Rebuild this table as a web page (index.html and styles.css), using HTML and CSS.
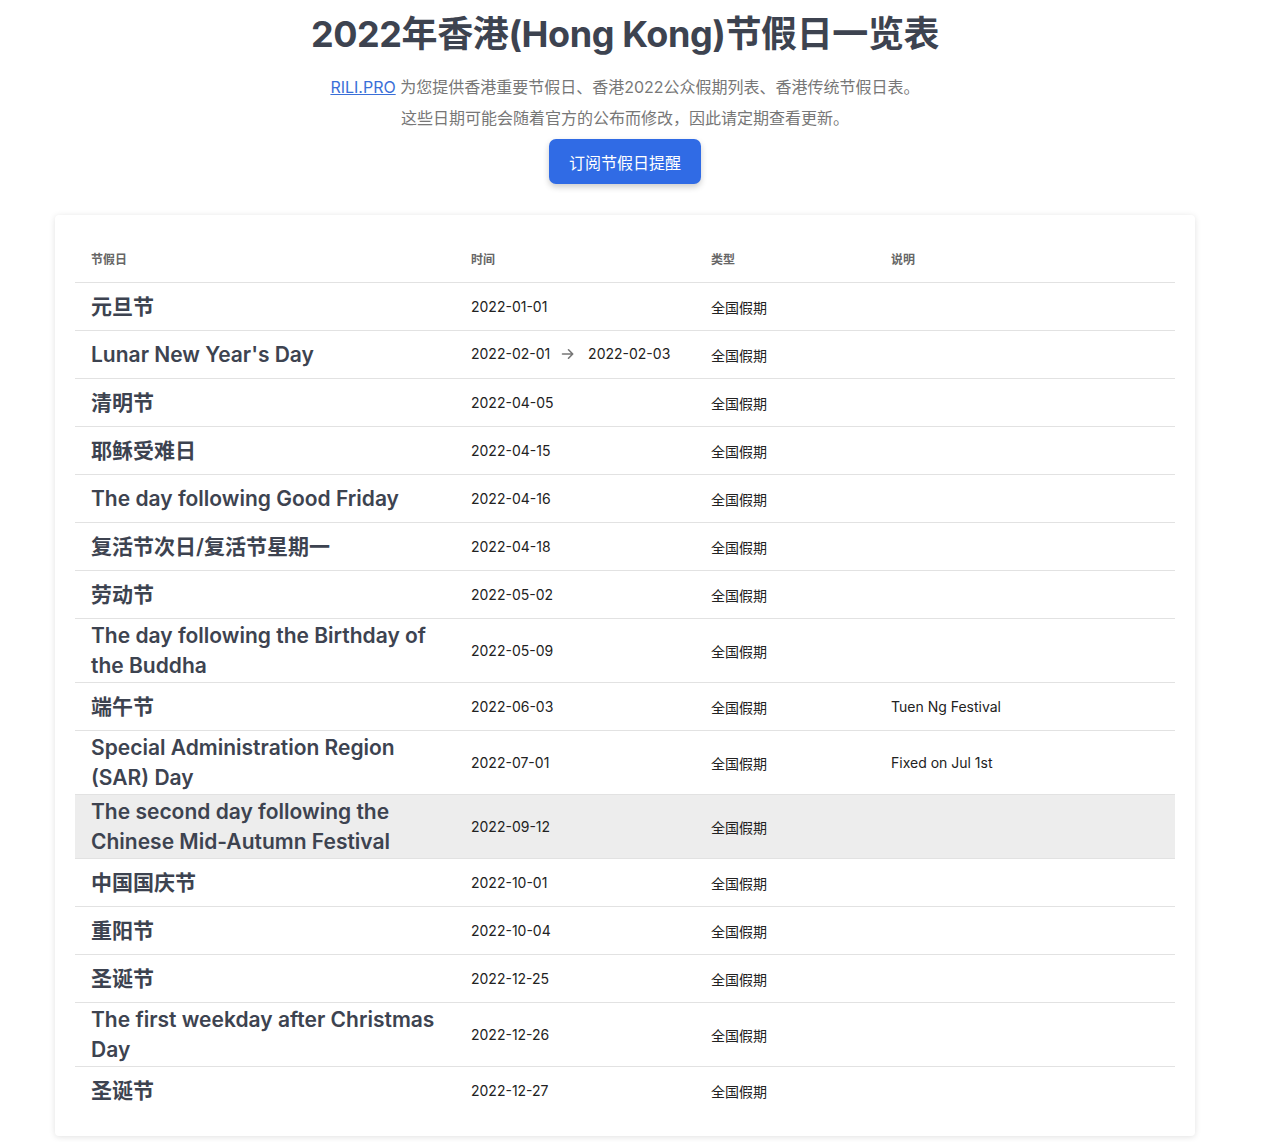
FILE: index.html
```html
<!DOCTYPE html>
<html lang="zh-CN">
<head>
    <meta charset="UTF-8">
    <meta name="viewport" content="width=device-width, initial-scale=1.0">
    <title>2022年香港(Hong Kong)节假日一览表</title>
    <link rel="stylesheet" href="styles.css">
</head>
<body>
    <div class="page">
        <header class="page-header">
            <h1>2022年香港(Hong Kong)节假日一览表</h1>
            <p class="intro"><a href="#">RILI.PRO</a> 为您提供香港重要节假日、香港2022公众假期列表、香港传统节假日表。</p>
            <p class="intro">这些日期可能会随着官方的公布而修改，因此请定期查看更新。</p>
            <button class="subscribe-btn">订阅节假日提醒</button>
        </header>

        <div class="holiday-card">
            <table class="holiday-table">
                <thead>
                    <tr>
                        <th class="col-name">节假日</th>
                        <th class="col-date">时间</th>
                        <th class="col-type">类型</th>
                        <th class="col-note">说明</th>
                    </tr>
                </thead>
                <tbody>
                    <tr>
                        <td class="name">元旦节</td>
                        <td>2022-01-01</td>
                        <td class="type">全国假期</td>
                        <td></td>
                    </tr>
                    <tr>
                        <td class="name">Lunar New Year's Day</td>
                        <td>2022-02-01 <span class="arrow"><svg width="16" height="16" viewBox="0 0 16 16"><path d="M2.5 8h10M8.5 3.8L12.7 8l-4.2 4.2" fill="none" stroke="#777" stroke-width="1.6" stroke-linecap="round" stroke-linejoin="round"/></svg></span> 2022-02-03</td>
                        <td class="type">全国假期</td>
                        <td></td>
                    </tr>
                    <tr>
                        <td class="name">清明节</td>
                        <td>2022-04-05</td>
                        <td class="type">全国假期</td>
                        <td></td>
                    </tr>
                    <tr>
                        <td class="name">耶稣受难日</td>
                        <td>2022-04-15</td>
                        <td class="type">全国假期</td>
                        <td></td>
                    </tr>
                    <tr>
                        <td class="name">The day following Good Friday</td>
                        <td>2022-04-16</td>
                        <td class="type">全国假期</td>
                        <td></td>
                    </tr>
                    <tr>
                        <td class="name">复活节次日/复活节星期一</td>
                        <td>2022-04-18</td>
                        <td class="type">全国假期</td>
                        <td></td>
                    </tr>
                    <tr>
                        <td class="name">劳动节</td>
                        <td>2022-05-02</td>
                        <td class="type">全国假期</td>
                        <td></td>
                    </tr>
                    <tr>
                        <td class="name">The day following the Birthday of the Buddha</td>
                        <td>2022-05-09</td>
                        <td class="type">全国假期</td>
                        <td></td>
                    </tr>
                    <tr>
                        <td class="name">端午节</td>
                        <td>2022-06-03</td>
                        <td class="type">全国假期</td>
                        <td>Tuen Ng Festival</td>
                    </tr>
                    <tr>
                        <td class="name">Special Administration Region (SAR) Day</td>
                        <td>2022-07-01</td>
                        <td class="type">全国假期</td>
                        <td>Fixed on Jul 1st</td>
                    </tr>
                    <tr class="active">
                        <td class="name">The second day following the Chinese Mid-Autumn Festival</td>
                        <td>2022-09-12</td>
                        <td class="type">全国假期</td>
                        <td></td>
                    </tr>
                    <tr>
                        <td class="name">中国国庆节</td>
                        <td>2022-10-01</td>
                        <td class="type">全国假期</td>
                        <td></td>
                    </tr>
                    <tr>
                        <td class="name">重阳节</td>
                        <td>2022-10-04</td>
                        <td class="type">全国假期</td>
                        <td></td>
                    </tr>
                    <tr>
                        <td class="name">圣诞节</td>
                        <td>2022-12-25</td>
                        <td class="type">全国假期</td>
                        <td></td>
                    </tr>
                    <tr>
                        <td class="name">The first weekday after Christmas Day</td>
                        <td>2022-12-26</td>
                        <td class="type">全国假期</td>
                        <td></td>
                    </tr>
                    <tr>
                        <td class="name">圣诞节</td>
                        <td>2022-12-27</td>
                        <td class="type">全国假期</td>
                        <td></td>
                    </tr>
                </tbody>
            </table>
        </div>
    </div>
</body>
</html>
```

FILE: styles.css
```css
/* General Styles */
body {
    font-family: "Inter", "Noto Sans CJK SC", sans-serif;
    margin: 0;
    padding: 0;
    background-color: #fff;
    color: #222;
}

.page {
    width: 1250px;
}

.page-header {
    text-align: center;
    padding-top: 11px;
}

.page-header h1 {
    margin: 0 0 15px;
    font-size: 36px;
    line-height: 46px;
    font-weight: 700;
    color: #3d4350;
    letter-spacing: -0.4px;
}

.intro {
    margin: 0;
    font-size: 16px;
    line-height: 31px;
    color: #777;
}

.intro a {
    color: #3a6fd8;
}

.subscribe-btn {
    margin-top: 5px;
    padding: 0 20px;
    height: 45px;
    background-color: #306be5;
    color: white;
    border: none;
    border-radius: 7px;
    font-family: inherit;
    font-size: 16px;
    box-shadow: 0 3px 6px rgba(0, 0, 0, 0.2);
    cursor: pointer;
}

/* Table card */
.holiday-card {
    width: 1100px;
    margin: 31px auto 6px;
    padding: 20px 20px 22px;
    background: white;
    border-radius: 4px;
    box-shadow: 0 1px 6px rgba(0, 0, 0, 0.12);
}

.holiday-table {
    width: 100%;
    border-collapse: collapse;
    font-size: 14px;
}

.holiday-table th {
    text-align: left;
    font-size: 12px;
    font-weight: 700;
    color: #666;
    height: 47px;
    padding: 0 16px;
    border-bottom: 1px solid #e2e2e2;
}

.col-name { width: 348px; }
.col-date { width: 208px; }
.col-type { width: 148px; }

.holiday-table td {
    padding: 0 16px;
    height: 47px;
    border-bottom: 1px solid #e2e2e2;
    color: #222;
}

.holiday-table tbody tr:last-child td {
    border-bottom: none;
}

.holiday-table td.name {
    height: 44px;
    padding: 2px 16px 1px;
    font-size: 21px;
    line-height: 30px;
    font-weight: 600;
    color: #3d4350;
}

.holiday-table td.type {
    font-family: "Noto Sans CJK SC", sans-serif;
    line-height: 18px;
}

.holiday-table tr.active {
    background: #ededed;
}

.arrow {
    display: inline-block;
    vertical-align: -3px;
    margin: 0 8px 0 6px;
}
```
